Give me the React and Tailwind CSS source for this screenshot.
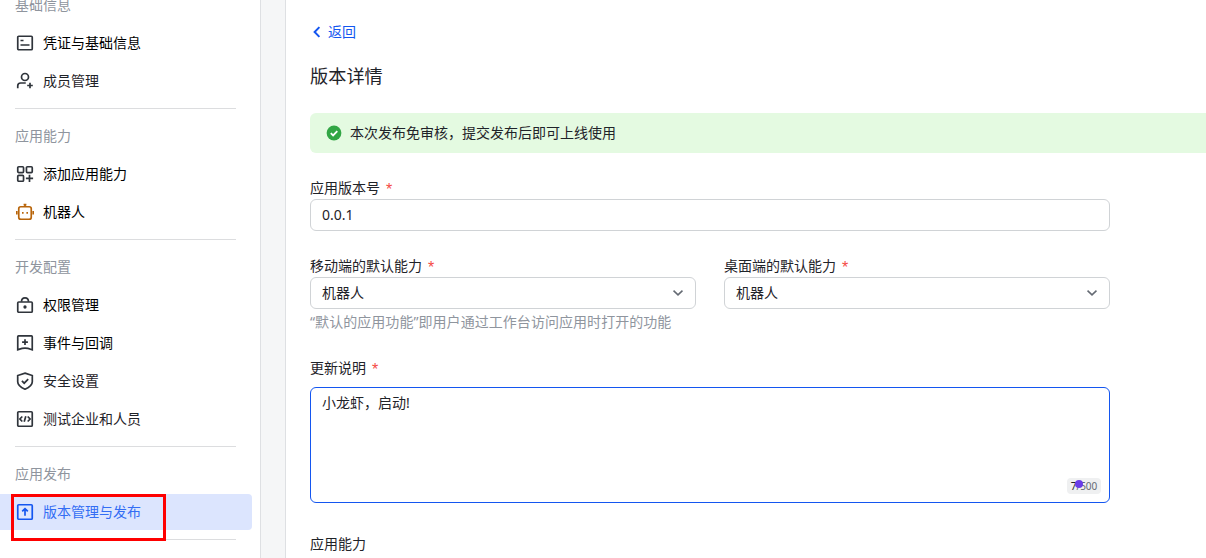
const navSections = [
  {
    title: "基础信息",
    items: [
      { label: "凭证与基础信息", icon: "card", strong: true },
      { label: "成员管理", icon: "member" },
    ],
  },
  {
    title: "应用能力",
    items: [
      { label: "添加应用能力", icon: "apps", strong: true },
      { label: "机器人", icon: "robot", strong: true },
    ],
  },
  {
    title: "开发配置",
    items: [
      { label: "权限管理", icon: "lock", strong: true },
      { label: "事件与回调", icon: "event", strong: true },
      { label: "安全设置", icon: "shield" },
      { label: "测试企业和人员", icon: "code" },
    ],
  },
  {
    title: "应用发布",
    items: [{ label: "版本管理与发布", icon: "release", active: true }],
  },
]

const iconShapes = {
  card: (
    <>
      <rect x="1.75" y="2.25" width="14.5" height="13.5" rx="1" />
      <path d="M4.5 6.5h3M4.5 11h9" />
    </>
  ),
  member: (
    <>
      <circle cx="9" cy="5" r="3.5" />
      <path d="M1.75 16.3v-2.5c0-1.8 1.2-2.8 2.9-2.8h5.1M14 10.7v5.6M11.2 13.5h5.6" />
    </>
  ),
  apps: (
    <>
      <rect x="1.75" y="1.75" width="5.8" height="5.8" rx="1" />
      <rect x="10.45" y="1.75" width="5.8" height="5.8" rx="1" />
      <rect x="1.75" y="10.45" width="5.8" height="5.8" rx="1" />
      <path d="M13.5 9.8v7.2M9.9 13.4h7.2" />
    </>
  ),
  robot: (
    <>
      <rect x="2.75" y="3.75" width="12.5" height="12.5" rx="2" />
      <path d="M9 .8v2.7M7.6 1.6h2.8M.8 8v3.4M17.2 8v3.4" />
      <path d="M6 9.8h1.6M10.4 9.8H12" />
    </>
  ),
  lock: (
    <>
      <rect x="1.75" y="6" width="14.5" height="10.25" rx="1" />
      <path d="M5.5 5.7c0-2.5 1.3-3.9 3.5-3.9s3.5 1.4 3.5 3.9" />
      <circle cx="9" cy="11" r=".8" fill="currentColor" />
    </>
  ),
  event: (
    <>
      <path d="M1.75 15.8V2.75a.8.8 0 0 1 .8-.8h12.9a.8.8 0 0 1 .8.8V15.8c-2.2-.8-4-1.7-7.25-1.7s-5 .9-7.25 1.7Z" />
      <path d="M9 5.3v5.8M6.1 8.2h5.8" />
    </>
  ),
  shield: (
    <>
      <path d="M9 1.1 16.3 3.5v6.2c0 3.6-3.4 5.8-7.3 7.5-3.9-1.7-7.3-3.9-7.3-7.5V3.5L9 1.1Z" />
      <path d="m5.9 8.9 2.3 2.3 4-4" />
    </>
  ),
  code: (
    <>
      <rect x="1.75" y="1.75" width="14.5" height="14.5" rx="1" />
      <path d="M6.3 6.5 3.9 9l2.4 2.5M11.7 6.5 14.1 9l-2.4 2.5M9.8 6.3l-1.6 5.4" />
    </>
  ),
  release: (
    <>
      <rect x="1.75" y="1.75" width="14.5" height="14.5" rx="1" />
      <path d="M9 12.8V5.9M6.2 8.4 9 5.6l2.8 2.8" />
    </>
  ),
}

function NavIcon({ name }) {
  return (
    <svg
      viewBox="0 0 18 18"
      fill="none"
      stroke="currentColor"
      strokeWidth="1.7"
      className={`size-[18px] shrink-0 ${name === "robot" ? "text-[#b8650b]" : ""}`}
    >
      {iconShapes[name]}
    </svg>
  )
}

function NavItem({ item }) {
  if (item.active) {
    return (
      <div className="relative flex h-9 items-center gap-[9px] rounded-r bg-[#dce5fe] pl-4 text-[#1456f0]">
        <NavIcon name={item.icon} />
        <span className="text-[#336df4]">{item.label}</span>
        <div className="absolute top-0 left-[11px] h-[47px] w-[155px] border-3 border-[#fe0000]" />
      </div>
    )
  }

  return (
    <div className="flex h-9 items-center gap-[9px] pl-4 text-[#2f343b]">
      <NavIcon name={item.icon} />
      <span className={item.strong ? "text-black" : "text-[#1f2329]"}>
        {item.label}
      </span>
    </div>
  )
}

function Sidebar() {
  return (
    <nav className="-mt-[13px] flex w-[252px] flex-col gap-0.5">
      {navSections.map((section) => (
        <div key={section.title} className="flex flex-col gap-0.5">
          <div className="flex h-9 items-center pl-[15px] text-[#8f959e]">
            {section.title}
          </div>
          {section.items.map((item) => (
            <NavItem key={item.label} item={item} />
          ))}
          <div className="my-[7px] mr-4 ml-[15px] h-px shrink-0 bg-[#dcdddf]" />
        </div>
      ))}
    </nav>
  )
}

function FieldLabel({ children, required = true }) {
  return (
    <div className="flex h-[22px] items-center gap-1.5">
      <span>{children}</span>
      {required ? (
        <span className="h-4 font-[Liberation_Sans] text-base leading-[19px] text-[#f54a45]">
          *
        </span>
      ) : null}
    </div>
  )
}

function SelectBox({ value }) {
  return (
    <div className="flex h-8 items-center justify-between rounded-md border border-[#d0d3d6] pr-3 pl-[11px]">
      <span>{value}</span>
      <svg
        viewBox="0 0 10 6"
        fill="none"
        stroke="#646a73"
        strokeWidth="1.6"
        className="h-1.5 w-2.5"
      >
        <path d="m.5.7 4.5 4.2L9.5.7" />
      </svg>
    </div>
  )
}

function VersionDetail() {
  return (
    <main className="flex min-w-0 flex-1 flex-col border-l border-[#dee0e3] bg-white pt-[21px] pl-6">
      <div className="flex h-[22px] items-center text-[#1456f0]">
        <svg
          viewBox="0 0 8 12"
          fill="none"
          stroke="currentColor"
          strokeWidth="2"
          className="mr-[7px] ml-[3px] h-3 w-2"
        >
          <path d="M6.4 1.1 1.6 6l4.8 4.9" />
        </svg>
        返回
      </div>

      <h1 className="mt-5 text-[18.2px] leading-[26px]">版本详情</h1>

      <div className="mt-6 flex h-10 items-center gap-2 rounded-l-md bg-[#e4fae1] pl-4">
        <svg viewBox="0 0 16 16" className="size-4">
          <circle cx="8" cy="8" r="7.4" fill="#32a645" />
          <path
            d="m4.8 8.1 2.3 2.3 4.2-4.2"
            fill="none"
            stroke="white"
            strokeWidth="1.8"
          />
        </svg>
        本次发布免审核，提交发布后即可上线使用
      </div>

      <div className="mt-6 w-[800px]">
        <FieldLabel>应用版本号</FieldLabel>
        <div className="flex h-8 items-center rounded-md border border-[#d0d3d6] pl-[11px]">
          0.0.1
        </div>

        <div className="mt-6 grid grid-cols-2 gap-7">
          <div>
            <FieldLabel>移动端的默认能力</FieldLabel>
            <SelectBox value="机器人" />
            <p className="mt-0.5 tracking-[0.05px] whitespace-nowrap text-[#8f959e]">
              “默认的应用功能”即用户通过工作台访问应用时打开的功能
            </p>
          </div>
          <div>
            <FieldLabel>桌面端的默认能力</FieldLabel>
            <SelectBox value="机器人" />
          </div>
        </div>

        <div className="mt-6">
          <FieldLabel>更新说明</FieldLabel>
          <div className="mt-2 flex h-[116px] flex-col justify-between rounded-md border border-[#1456f0] pt-1 pr-2 pb-2 pl-[11px]">
            <span>小龙虾，启动!</span>
            <div className="relative flex h-4 w-[34px] items-center justify-center self-end rounded bg-[#eff0f1] text-[10px] leading-4 text-[#646a73]">
              <span className="text-[#1f2329]">7</span>/500
              <span className="absolute top-0.5 left-2 size-2 rounded-full bg-[#6a3de8]" />
            </div>
          </div>
        </div>

        <div className="mt-[30px]">
          <FieldLabel required={false}>应用能力</FieldLabel>
        </div>
      </div>
    </main>
  )
}

export default function App() {
  return (
    <div className="flex h-[558px] w-full overflow-hidden bg-white font-['Noto_Sans','Noto_Sans_CJK_SC',sans-serif] text-sm leading-[22px] text-[#1f2329]">
      <aside className="w-[261px] shrink-0 border-r border-[#dee0e3]">
        <Sidebar />
      </aside>
      <div className="w-6 shrink-0 bg-[#f5f6f7]" />
      <VersionDetail />
    </div>
  )
}
